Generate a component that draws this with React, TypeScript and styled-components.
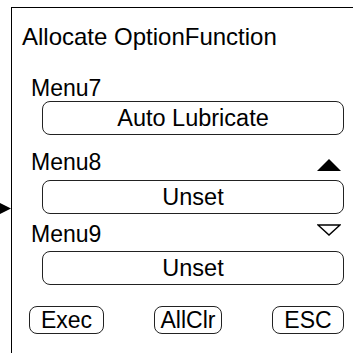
import React from "react";
import styled, { createGlobalStyle } from "styled-components";

const Global = createGlobalStyle`
  html, body { margin: 0; padding: 0; background: #fff; }
  body { font-family: "Liberation Sans", Arial, sans-serif; color: #000; }
  #root { width: 353px; height: 353px; overflow: hidden; }
`;

const Page = styled.div`
  position: relative;
  width: 353px;
  height: 353px;
  padding: 7px 0 0 11px;
  box-sizing: border-box;
`;

const Panel = styled.div`
  height: 100%;
  border-left: 1px solid #000;
  border-top: 1px solid #000;
  box-sizing: border-box;
  display: flex;
  flex-direction: column;
  padding: 0 9px 0 0;
`;

const Title = styled.div`
  font-size: 24px;
  line-height: 26px;
  margin: 16px 0 0 10px;
  white-space: nowrap;
`;

const Section = styled.div<{ $top: number }>`
  display: flex;
  flex-direction: column;
  margin-top: ${(p) => p.$top}px;
`;

const LabelRow = styled.div<{ $gap: number }>`
  display: flex;
  align-items: center;
  justify-content: space-between;
  height: 26px;
  margin: 0 3px ${(p) => p.$gap}px 19px;
`;

const Label = styled.span`
  font-size: 23px;
  line-height: 26px;
`;

const ValueBox = styled.div`
  margin-left: 30px;
  height: 34px;
  box-sizing: border-box;
  border: 1.5px solid #222;
  border-radius: 8px;
  display: flex;
  align-items: center;
  justify-content: center;
  font-size: 23.5px;
  line-height: 26px;
`;

const ButtonRow = styled.div`
  display: flex;
  justify-content: space-between;
  margin: 21px 0 0 17px;
`;

const Key = styled.div<{ $w: number }>`
  width: ${(p) => p.$w}px;
  height: 28px;
  box-sizing: border-box;
  border: 1.5px solid #222;
  border-radius: 8px;
  display: flex;
  align-items: center;
  justify-content: center;
  font-size: 23px;
  line-height: 26px;
`;

const Cursor = styled.svg`
  position: absolute;
  left: 0;
  top: 203px;
`;

const Icon = styled.svg<{ $dy: number }>`
  display: block;
  position: relative;
  top: ${(p) => p.$dy}px;
`;

export default function App() {
  return (
    <>
      <Global />
      <Page>
        <Cursor width="11" height="11" viewBox="0 0 11 11">
          <polygon points="0,0 11,5.5 0,11" fill="#000" />
        </Cursor>
        <Panel>
          <Title>Allocate OptionFunction</Title>
          <Section $top={25}>
            <LabelRow $gap={0}>
              <Label>Menu7</Label>
            </LabelRow>
            <ValueBox>Auto Lubricate</ValueBox>
          </Section>
          <Section $top={14}>
            <LabelRow $gap={5}>
              <Label>Menu8</Label>
              <Icon $dy={3} width="24" height="12" viewBox="0 0 24 12">
                <polygon points="12,0 24,12 0,12" fill="#000" />
              </Icon>
            </LabelRow>
            <ValueBox>Unset</ValueBox>
          </Section>
          <Section $top={7}>
            <LabelRow $gap={4}>
              <Label>Menu9</Label>
              <Icon $dy={-4} width="24" height="12" viewBox="0 0 24 12">
                <polygon points="1,1 23,1 12,11" fill="none" stroke="#000" strokeWidth="1.5" />
              </Icon>
            </LabelRow>
            <ValueBox>Unset</ValueBox>
          </Section>
          <ButtonRow>
            <Key $w={75}>Exec</Key>
            <Key $w={68}>AllClr</Key>
            <Key $w={72}>ESC</Key>
          </ButtonRow>
        </Panel>
      </Page>
    </>
  );
}
